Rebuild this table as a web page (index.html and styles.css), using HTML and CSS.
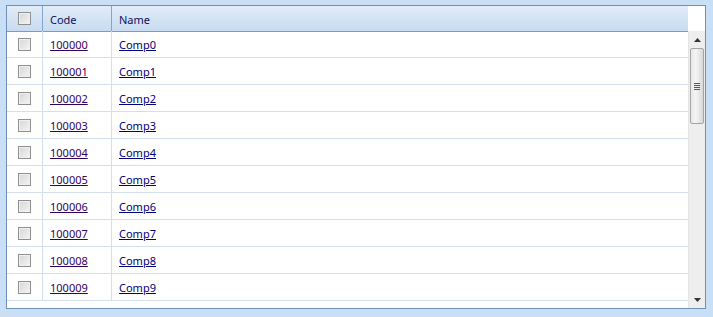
FILE: index.html
```html
<!DOCTYPE html>
<html>
<head>
<meta charset="utf-8">
<link rel="stylesheet" href="styles.css">
</head>
<body>
<div class="grid">
  <div class="head">
    <div class="hcell c-chk"><span class="chk"></span></div>
    <div class="hcell c-code">Code</div>
    <div class="hcell c-name">Name</div>
    <div class="hspacer"></div>
  </div>
  <div class="body">
    <div class="rows">
      <div class="row"><div class="cell c-chk"><span class="chk"></span></div><div class="cell c-code"><a href="#" class="lk">100000</a></div><div class="cell c-name"><a href="#" class="ln">Comp0</a></div></div>
      <div class="row"><div class="cell c-chk"><span class="chk"></span></div><div class="cell c-code"><a href="#" class="lk">100001</a></div><div class="cell c-name"><a href="#" class="ln">Comp1</a></div></div>
      <div class="row"><div class="cell c-chk"><span class="chk"></span></div><div class="cell c-code"><a href="#" class="lk">100002</a></div><div class="cell c-name"><a href="#" class="ln">Comp2</a></div></div>
      <div class="row"><div class="cell c-chk"><span class="chk"></span></div><div class="cell c-code"><a href="#" class="lk">100003</a></div><div class="cell c-name"><a href="#" class="ln">Comp3</a></div></div>
      <div class="row"><div class="cell c-chk"><span class="chk"></span></div><div class="cell c-code"><a href="#" class="lk">100004</a></div><div class="cell c-name"><a href="#" class="ln">Comp4</a></div></div>
      <div class="row"><div class="cell c-chk"><span class="chk"></span></div><div class="cell c-code"><a href="#" class="lk">100005</a></div><div class="cell c-name"><a href="#" class="ln">Comp5</a></div></div>
      <div class="row"><div class="cell c-chk"><span class="chk"></span></div><div class="cell c-code"><a href="#" class="lk">100006</a></div><div class="cell c-name"><a href="#" class="ln">Comp6</a></div></div>
      <div class="row"><div class="cell c-chk"><span class="chk"></span></div><div class="cell c-code"><a href="#" class="lk">100007</a></div><div class="cell c-name"><a href="#" class="ln">Comp7</a></div></div>
      <div class="row"><div class="cell c-chk"><span class="chk"></span></div><div class="cell c-code"><a href="#" class="lk">100008</a></div><div class="cell c-name"><a href="#" class="ln">Comp8</a></div></div>
      <div class="row"><div class="cell c-chk"><span class="chk"></span></div><div class="cell c-code"><a href="#" class="lk">100009</a></div><div class="cell c-name"><a href="#" class="ln">Comp9</a></div></div>
    </div>
    <div class="scroll">
      <div class="arrow up"><svg width="7" height="4" viewBox="0 0 7 4"><path d="M3.5 0 L7 4 L0 4 Z" fill="#333"/></svg></div>
      <div class="thumb"><span class="grip"></span><span class="grip"></span><span class="grip"></span><span class="grip"></span></div>
      <div class="track"></div>
      <div class="arrow down"><svg width="7" height="4" viewBox="0 0 7 4"><path d="M0 0 L7 0 L3.5 4 Z" fill="#333"/></svg></div>
    </div>
  </div>
</div>
</body>
</html>
```

FILE: styles.css
```css
html, body {
  margin: 0;
  padding: 0;
  background: #c9dff6;
}
body {
  padding: 5px 0 0 6px;
  font-family: "Noto Sans", "Open Sans", "DejaVu Sans", sans-serif;
  font-size: 11px;
}
.grid {
  width: 698px;
  height: 302px;
  border: 1px solid #6f91b6;
  background: #fff;
  display: flex;
  flex-direction: column;
}
.head {
  display: flex;
  height: 25px;
}
.hcell {
  height: 24px;
  padding-top: 1px;
  border-bottom: 1px solid #7c9cc4;
  border-right: 1px solid #86a5cc;
  background: linear-gradient(#e2ecf7, #c7dbf1);
  display: flex;
  align-items: center;
  color: #10105e;
  box-sizing: content-box;
}
.hcell.c-chk { padding-top: 0; height: 25px; }
.c-chk { width: 35px; justify-content: center; }
.c-name { flex: 1; border-right: none; }
.hcell.c-code, .hcell.c-name { padding-left: 7px; }
.hcell.c-code { width: 61px; }
.hspacer { width: 17px; background: #fff; }
.body {
  display: flex;
  flex: 1;
  min-height: 0;
}
.rows {
  flex: 1;
  display: flex;
  flex-direction: column;
}
.row {
  display: flex;
  height: 26px;
  border-bottom: 1px solid #d3dfec;
}
.cell {
  display: flex;
  align-items: center;
  border-right: 1px solid #d3dfec;
}
.cell.c-code { width: 61px; padding-left: 7px; }
.cell.c-name { padding-left: 7px; border-right: none; }
.lk { color: #32005e; text-decoration: underline; }
.ln { color: #00007a; text-decoration: underline; }
.chk {
  width: 11px;
  height: 11px;
  border: 1px solid #8f8f8f;
  background: linear-gradient(135deg, #d6d6d6, #f4f4f4);
  box-shadow: inset 0 0 0 1px #f0f0f0;
  display: block;
}
.scroll {
  width: 16px;
  border-left: 1px solid #e4e4e4;
  background: #eeeeee;
  display: flex;
  flex-direction: column;
}
.arrow {
  height: 17px;
  display: flex;
  align-items: center;
  justify-content: center;
}
.thumb {
  height: 76px;
  margin: 0 1px;
  border: 1px solid #a4a4a4;
  border-radius: 2px;
  background: linear-gradient(90deg, #e8e8e8, #f4f4f4 40%, #d8d8d8);
  display: flex;
  flex-direction: column;
  align-items: center;
  justify-content: center;
  gap: 1px;
  box-sizing: border-box;
}
.grip {
  width: 6px;
  height: 1px;
  background: #555;
  display: block;
}
.track { flex: 1; }
```
